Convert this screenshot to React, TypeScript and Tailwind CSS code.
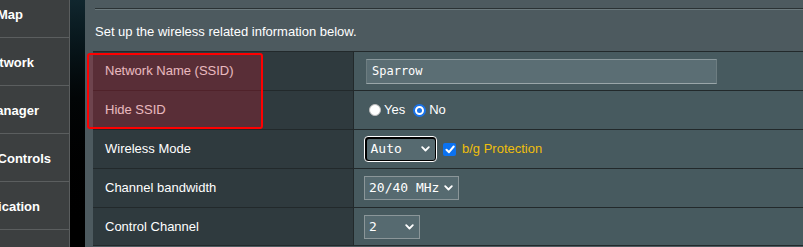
import React from 'react';

const menu = [
  { label: 'Network Map', pr: 'pr-[46px]' },
  { label: 'Guest Network', pr: 'pr-[35px]' },
  { label: 'Traffic Manager', pr: 'pr-[30px]' },
  { label: 'Parental Controls', pr: 'pr-[18px]' },
  { label: 'USB Application', pr: 'pr-[29px]' },
  { label: 'AiProtection', pr: 'pr-[20px]' },
];

const Chevron = () => (
  <svg width="9" height="6" viewBox="0 0 9 6" className="shrink-0">
    <polyline points="1.2,1.2 4.5,4.5 7.8,1.2" fill="none" stroke="#fff" strokeWidth="1.8" strokeLinecap="round" strokeLinejoin="round" />
  </svg>
);

const Row: React.FC<{ label: string; children: React.ReactNode; last?: boolean }> = ({ label, children, last }) => (
  <div className={`flex h-[39px] border-t border-[#22292b] ${last ? 'border-b' : ''}`}>
    <div className="flex w-[261px] shrink-0 items-center border-r border-[#22292b] bg-[#2f3a3e] pl-[12px] text-[13px] text-white">
      {label}
    </div>
    <div className="flex flex-1 items-center bg-[#475a5f] pl-[10px]">{children}</div>
  </div>
);

const App: React.FC = () => {
  return (
    <div className="flex h-[247px] w-[803px] overflow-hidden font-['Liberation_Sans',Arial,sans-serif]">
      {/* side menu, cut off on the left */}
      <aside className="w-[70px] shrink-0 overflow-hidden border-r border-[#5a5d5e] bg-[#3c3f40]">
        <div className="-mt-[10px]">
          {menu.map((m) => (
            <div
              key={m.label}
              className={`flex h-[48px] items-center justify-end border-b border-[#5b5e5f] pt-[3px] ${m.pr}`}
            >
              <span className="whitespace-nowrap text-[13px] font-bold text-white">{m.label}</span>
            </div>
          ))}
        </div>
      </aside>
      <div className="w-[15px] shrink-0 bg-gradient-to-b from-[#10262e] via-[#020506] via-40% to-black" />

      <main className="relative flex-1 bg-[#4d5a5f] pl-[8px]">
        <div className="h-[8px]" />
        <div className="ml-[2px] h-[2px] border-t border-b border-t-[#2a3234] border-b-[#6b797d]" />
        <p className="mt-[14px] ml-[2px] h-[15px] text-[13px] leading-[15px] text-white">
          Set up the wireless related information below.
        </p>

        <div className="mt-[12px]">
          <Row label="Network Name (SSID)">
            <div className="ml-[2px] flex h-[25px] w-[351px] items-center border-y border-x border-t-[#8a989c] border-b-[#9aa6a9] border-x-[#6d7d81] bg-[#5b6e74] pl-[5px] font-['DejaVu_Sans_Mono',monospace] text-[12px] text-white">
              Sparrow
            </div>
          </Row>
          <Row label="Hide SSID">
            <div className="flex items-center pl-[5px] text-[13px] text-white">
              <span className="mr-[3px] h-[12px] w-[12px] rounded-full border border-[#bdbdbd] bg-white" />
              <span>Yes</span>
              <span className="ml-[8px] mr-[3px] flex h-[13px] w-[13px] items-center justify-center rounded-full border-2 border-[#1a73e8] bg-white">
                <span className="h-[5px] w-[5px] rounded-full bg-[#1a73e8]" />
              </span>
              <span>No</span>
            </div>
          </Row>
          <Row label="Wireless Mode">
            <div className="flex items-center">
              <div className="flex h-[26px] w-[73px] items-center justify-between rounded-[4px] border border-white bg-black p-[1.5px]">
                <div className="flex h-full w-full items-center justify-between rounded-[2px] bg-[#566a70] pl-[4px] pr-[5px] font-['DejaVu_Sans_Mono',monospace] text-[13px] text-white">
                  <span>Auto</span>
                  <Chevron />
                </div>
              </div>
              <span className="ml-[6px] flex h-[13px] w-[13px] items-center justify-center rounded-[2px] bg-[#0b72f0]">
                <svg width="10" height="9" viewBox="0 0 10 9">
                  <polyline points="1.5,4.8 4,7.2 8.7,1.5" fill="none" stroke="#fff" strokeWidth="2" strokeLinecap="round" strokeLinejoin="round" />
                </svg>
              </span>
              <span className="ml-[6px] text-[13px] text-[#efbf0c]">b/g Protection</span>
            </div>
          </Row>
          <Row label="Channel bandwidth">
            <div className="flex h-[24px] w-[95px] items-center justify-between border border-[#8b9699] bg-[#566a70] pl-[4px] pr-[5px] font-['DejaVu_Sans_Mono',monospace] text-[13px] text-white">
              <span>20/40 MHz</span>
              <Chevron />
            </div>
          </Row>
          <Row label="Control Channel" last>
            <div className="flex h-[24px] w-[56px] items-center justify-between border border-[#8b9699] bg-[#566a70] pl-[4px] pr-[5px] font-['DejaVu_Sans_Mono',monospace] text-[13px] text-white">
              <span>2</span>
              <Chevron />
            </div>
          </Row>
        </div>

        {/* red annotation box */}
        <div className="absolute left-[2px] top-[53px] h-[76px] w-[176px] rounded-[3px] border-2 border-[#ff0000] bg-[rgba(190,20,40,0.3)]" />
      </main>
    </div>
  );
};

export default App;
